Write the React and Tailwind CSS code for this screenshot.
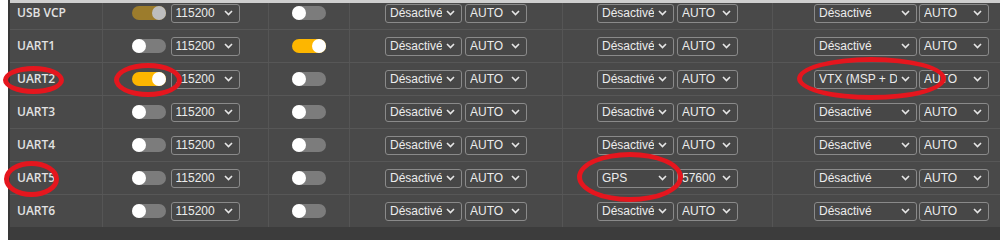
import React from "react";

const ports = [
  { name: "USB VCP", msp: "locked", baud: "115200", telem: false, sensor: "Désactivé", sensorBaud: "AUTO", periph: "Désactivé", periphBaud: "AUTO" },
  { name: "UART1", msp: "off", baud: "115200", telem: true, sensor: "Désactivé", sensorBaud: "AUTO", periph: "Désactivé", periphBaud: "AUTO" },
  { name: "UART2", msp: "on", baud: "115200", telem: false, sensor: "Désactivé", sensorBaud: "AUTO", periph: "VTX (MSP + DisplayPort)", periphBaud: "AUTO" },
  { name: "UART3", msp: "off", baud: "115200", telem: false, sensor: "Désactivé", sensorBaud: "AUTO", periph: "Désactivé", periphBaud: "AUTO" },
  { name: "UART4", msp: "off", baud: "115200", telem: false, sensor: "Désactivé", sensorBaud: "AUTO", periph: "Désactivé", periphBaud: "AUTO" },
  { name: "UART5", msp: "off", baud: "115200", telem: false, sensor: "GPS", sensorBaud: "57600", periph: "Désactivé", periphBaud: "AUTO" },
  { name: "UART6", msp: "off", baud: "115200", telem: false, sensor: "Désactivé", sensorBaud: "AUTO", periph: "Désactivé", periphBaud: "AUTO" },
];

function Toggle({ state }) {
  if (state === "locked") {
    return (
      <div className="flex h-[14px] w-[34px] items-center justify-end rounded-full bg-[#9c7c2c]">
        <div className="h-[14px] w-[14px] rounded-full bg-[#bdbdbd]" />
      </div>
    );
  }
  if (state === "on") {
    return (
      <div className="flex h-[14px] w-[34px] items-center justify-end rounded-full bg-[#fdb600]">
        <div className="h-[14px] w-[14px] rounded-full bg-white" />
      </div>
    );
  }
  return (
    <div className="flex h-[14px] w-[34px] items-center justify-start rounded-full bg-[#7c7c7c]">
      <div className="h-[14px] w-[14px] rounded-full bg-white" />
    </div>
  );
}

function Chevron() {
  return (
    <svg width="9" height="6" viewBox="0 0 9 6" className="shrink-0">
      <path d="M1 1 L4.5 4.5 L8 1" fill="none" stroke="#e6e6e6" strokeWidth="1.6" />
    </svg>
  );
}

function Select({ value, width }) {
  return (
    <div
      className={`flex h-[19px] items-center gap-[4px] rounded-[3px] border border-[#8a8a8a] bg-[#474747] pl-[4px] pr-[6px] ${width}`}
    >
      <span className="flex-1 overflow-hidden whitespace-nowrap text-[12px] leading-none text-[#ececec] font-['Liberation_Sans',Arial,sans-serif]">
        {value}
      </span>
      <Chevron />
    </div>
  );
}

function Ring({ className }) {
  return (
    <div
      className={`pointer-events-none absolute rounded-[50%] border-[5px] border-[#e5161e] ${className}`}
    />
  );
}

export default function App() {
  return (
    <div className="relative h-[240px] w-[1000px] overflow-hidden bg-white">
      <div className="ml-[8px] flex h-full flex-col border-l-2 border-[#383838] bg-[#3c3c3c]">
        <div className="h-[3px] bg-[#cfcfcf]" />
        <div className="h-[224px] overflow-hidden bg-[#494949]">
          <div className="-mt-[6px] w-[1020px]">
            {ports.map((p) => (
              <div
                key={p.name}
                className="grid h-[33px] grid-cols-[93px_166px_81px_213px_210px_257px] border-b border-[#575757]"
              >
                <div className="flex items-center border-r border-[#555555] pl-[7px] text-[12px] font-semibold text-[#e2e2e2] font-['Open_Sans',sans-serif]">
                  {p.name}
                </div>
                <div className="flex items-center justify-center gap-[5px] border-r border-[#555555]">
                  <Toggle state={p.msp} />
                  <Select value={p.baud} width="w-[69px]" />
                </div>
                <div className="flex items-center justify-center border-r border-[#555555]">
                  <Toggle state={p.telem ? "on" : "off"} />
                </div>
                <div className="flex items-center justify-center gap-[3px] border-r border-[#555555]">
                  <Select value="Désactivé" width="w-[77px]" />
                  <Select value="AUTO" width="w-[62px]" />
                </div>
                <div className="flex items-center justify-center gap-[3px] border-r border-[#555555]">
                  <Select value={p.sensor} width="w-[77px]" />
                  <Select value={p.sensorBaud} width="w-[61px]" />
                </div>
                <div className="flex items-center justify-center gap-[2px]">
                  <Select value={p.periph} width="w-[103px]" />
                  <Select value={p.periphBaud} width="w-[70px]" />
                </div>
              </div>
            ))}
          </div>
        </div>
      </div>

      <Ring className="left-[3px] top-[66px] h-[28px] w-[61px]" />
      <Ring className="left-[114px] top-[63px] h-[34px] w-[68px]" />
      <Ring className="left-[4px] top-[161px] h-[36px] w-[55px]" />
      <Ring className="left-[577px] top-[152px] h-[50px] w-[106px]" />
      <Ring className="left-[797px] top-[57px] h-[43px] w-[149px]" />
    </div>
  );
}
